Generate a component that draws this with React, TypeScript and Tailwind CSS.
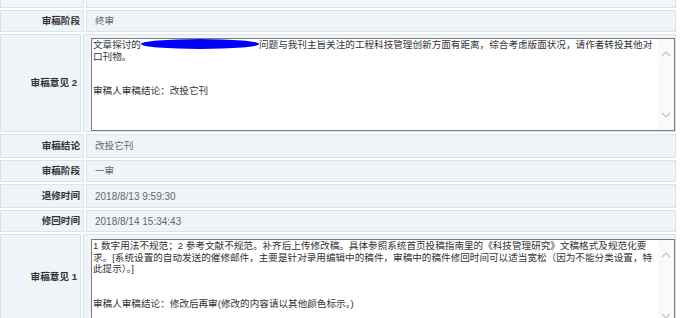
import React from "react";

const font = { fontFamily: '"Liberation Sans", "Noto Sans CJK SC", sans-serif' };

function Chevron({ up }: { up?: boolean }) {
  return (
    <svg width="10" height="6" viewBox="0 0 10 6">
      <polyline
        points={up ? "1,5 5,1 9,5" : "1,1 5,5 9,1"}
        fill="none"
        stroke="#c4c4c4"
        strokeWidth="1.2"
      />
    </svg>
  );
}

function Area({ children, h }: { children: React.ReactNode; h: number }) {
  return (
    <div
      className="relative flex w-[584px] border border-[#7d7d7d] bg-white text-[#333]"
      style={{ height: h }}
    >
      <div className="flex-1 whitespace-nowrap pl-[1px] text-[9.6px] leading-[11.6px]">{children}</div>
      <div className="flex w-[17px] flex-col items-center justify-between bg-[#fafafa] pt-[12px] pb-[12px]">
        <Chevron up />
        <Chevron />
      </div>
    </div>
  );
}

function Row({
  label,
  h,
  children,
  top,
}: {
  label?: string;
  h: number;
  children?: React.ReactNode;
  top?: number;
}) {
  return (
    <div className="flex gap-[2px]" style={{ height: h }}>
      <div className="flex w-[84px] items-center justify-end border border-[#d6e5ea] bg-[#eef4f7] pr-[3px] text-[9.6px] font-bold text-[#333]">
        {label}
      </div>
      <div
        className="flex flex-1 border border-[#d6e5ea] bg-[#eef4f7]"
        style={top !== undefined ? { paddingTop: top, paddingLeft: 7 } : { alignItems: "center", paddingLeft: 8 }}
      >
        {children}
      </div>
    </div>
  );
}

export default function App() {
  return (
    <div className="h-[318px] w-[682px] overflow-hidden bg-white" style={font}>
      <div className="flex w-[676px] flex-col gap-[2px]">
        <div className="flex gap-[2px]" style={{ height: 8 }}>
          <div className="w-[84px] border-x border-b border-[#d6e5ea] bg-[#f1f6f8]" />
          <div className="flex-1 border-x border-b border-[#d6e5ea] bg-[#f1f6f8]" />
        </div>
        <Row label="审稿阶段" h={22}>
          <span className="text-[9.6px] text-[#666]">终审</span>
        </Row>
        <Row label="审稿意见 2" h={98} top={3}>
          <Area h={93}>
            <div className="flex items-center">
              <span>文章探讨的</span>
              <span className="relative -top-[1px] inline-block h-[10px] w-[118px] rounded-[50%] bg-[#0000ff]" />
              <span>问题与我刊主旨关注的工程科技管理创新方面有距离，综合考虑版面状况，请作者转投其他对</span>
            </div>
            <div>口刊物。</div>
            <div>&nbsp;</div>
            <div>&nbsp;</div>
            <div>审稿人审稿结论：改投它刊</div>
          </Area>
        </Row>
        <Row label="审稿结论" h={24}>
          <span className="text-[9.6px] text-[#666]">改投它刊</span>
        </Row>
        <Row label="审稿阶段" h={22}>
          <span className="text-[9.6px] text-[#666]">一审</span>
        </Row>
        <Row label="退修时间" h={24}>
          <span className="text-[10px] text-[#666]">2018/8/13 9:59:30</span>
        </Row>
        <Row label="修回时间" h={22}>
          <span className="text-[10px] text-[#666]">2018/8/14 15:34:43</span>
        </Row>
        <Row label="审稿意见 1" h={86} top={4}>
          <Area h={93}>
            <div>1 数字用法不规范；2 参考文献不规范。补齐后上传修改稿。具体参照系统首页投稿指南里的《科技管理研究》文稿格式及规范化要</div>
            <div>求。[系统设置的自动发送的催修邮件，主要是针对录用编辑中的稿件，审稿中的稿件修回时间可以适当宽松（因为不能分类设置，特</div>
            <div>此提示）。]</div>
            <div>&nbsp;</div>
            <div>&nbsp;</div>
            <div>审稿人审稿结论：修改后再审(修改的内容请以其他颜色标示。)</div>
          </Area>
        </Row>
      </div>
    </div>
  );
}
